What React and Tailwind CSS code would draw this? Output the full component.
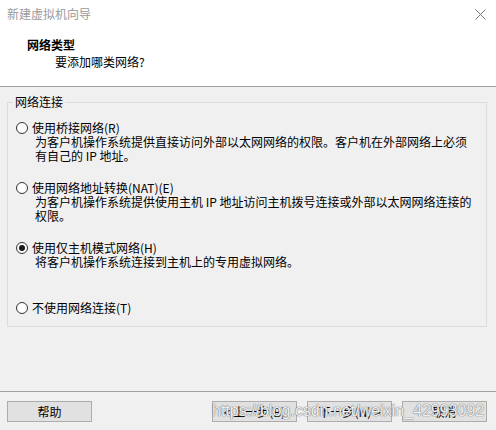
import React from 'react';

const font = "font-['Noto_Sans_CJK_SC','Noto_Sans',sans-serif]";

function Radio({ checked }) {
  return (
    <span className="flex h-[12px] w-[12px] shrink-0 items-center justify-center rounded-full border border-[#333333] bg-white">
      {checked && <span className="h-[6px] w-[6px] rounded-full bg-[#1a1a1a]" />}
    </span>
  );
}

function Option({ label, checked, lines = [], last }) {
  return (
    <div className={last ? '' : 'h-[60px]'}>
      <div className="flex h-[14px] items-center gap-[4px]">
        <Radio checked={checked} />
        <span className="leading-[14px]">{label}</span>
      </div>
      {lines.map((l, i) => (
        <div key={i} className="pl-[19px] leading-[14px] whitespace-nowrap">
          {l}
        </div>
      ))}
    </div>
  );
}

function Button({ children }) {
  return (
    <button className="flex h-[21px] w-[85px] items-center justify-center border border-[#adadad] bg-[#e1e1e1] text-[12px] leading-[14px] text-black">
      {children}
    </button>
  );
}

export default function App() {
  return (
    <div className={`relative flex h-[430px] w-[496px] flex-col bg-[#f0f0f0] text-[12px] text-black ${font}`}>
      {/* header */}
      <div className="h-[87px] border-b border-[#a0a0a0] bg-white">
        <div className="flex h-[28px] items-center justify-between pl-[7px] pr-[10px]">
          <span className="leading-[14px] text-[#9a9a9a]">新建虚拟机向导</span>
          <svg width="11" height="11" viewBox="0 0 11 11" className="mt-[1px]">
            <path d="M0.5 0.5L10.5 10.5M10.5 0.5L0.5 10.5" stroke="#777" strokeWidth="1" />
          </svg>
        </div>
        <div className="mt-[10px] pl-[27px] font-bold leading-[14px]">网络类型</div>
        <div className="mt-[3px] pl-[55px] leading-[14px]">要添加哪类网络?</div>
      </div>

      {/* group box */}
      <div className="relative ml-[7px] mt-[15px] w-[480px] border border-[#dcdcdc] pl-[8px] pt-[18px] pb-[11px]">
        <span className="absolute -top-[8px] left-[5px] bg-[#f0f0f0] px-[2px] leading-[14px]">网络连接</span>
        <Option
          label="使用桥接网络(R)"
          lines={[
            '为客户机操作系统提供直接访问外部以太网网络的权限。客户机在外部网络上必须',
            '有自己的 IP 地址。',
          ]}
        />
        <Option
          label="使用网络地址转换(NAT)(E)"
          lines={[
            '为客户机操作系统提供使用主机 IP 地址访问主机拨号连接或外部以太网网络连接的',
            '权限。',
          ]}
        />
        <Option checked label="使用仅主机模式网络(H)" lines={[' 将客户机操作系统连接到主机上的专用虚拟网络。']} />
        <Option last label="不使用网络连接(T)" />
      </div>

      <div className="flex-1" />

      {/* footer */}
      <div className="flex h-[39px] items-start border-t border-[#a0a0a0] pt-[9px] pl-[7px] pr-[9px]">
        <Button>帮助</Button>
        <div className="ml-auto flex gap-[10px]">
          <Button>&lt; 上一步(B)</Button>
          <Button>下一步(N) &gt;</Button>
          <Button>取消</Button>
        </div>
      </div>

      {/* watermark */}
      <span className="pointer-events-none absolute left-[212px] top-[402px] font-['Liberation_Sans',sans-serif] text-[16px] leading-[18px] text-white/90 [text-shadow:0_0_1px_#666,0_0_1px_#666]">
        https://blog.csdn.net/weixin_42993092
      </span>
    </div>
  );
}
